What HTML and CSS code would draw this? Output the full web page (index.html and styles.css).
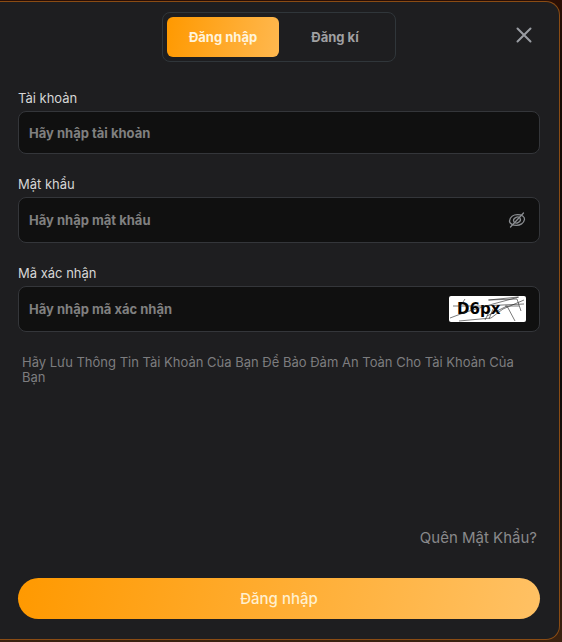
FILE: index.html
```html
<!DOCTYPE html>
<html lang="vi">
<head>
<meta charset="utf-8">
<meta name="viewport" content="width=device-width, initial-scale=1">
<title>Đăng nhập</title>
<link rel="stylesheet" href="styles.css">
</head>
<body>
<main class="modal">
  <header class="modal-head">
    <div class="tabs">
      <button class="tab tab-active" type="button">Đăng nhập</button>
      <button class="tab" type="button">Đăng kí</button>
    </div>
    <button class="icon-button close" type="button" aria-label="Đóng">
      <svg width="16" height="16" viewBox="0 0 16 16" fill="none" stroke="currentColor" stroke-width="2" stroke-linecap="round"><path d="M1.5 1.5l13 13M14.5 1.5l-13 13"/></svg>
    </button>
  </header>
  <form class="form">
    <div class="group">
      <label for="account">Tài khoản</label>
      <div class="field field-short">
        <input id="account" type="text" placeholder="Hãy nhập tài khoản">
      </div>
    </div>
    <div class="group">
      <label for="password">Mật khẩu</label>
      <div class="field">
        <input id="password" type="password" placeholder="Hãy nhập mật khẩu">
        <button class="icon-button" type="button" aria-label="Hiện mật khẩu">
          <svg width="18" height="16" viewBox="0 0 18 16" fill="none" stroke="currentColor" stroke-width="1.3" stroke-linecap="round"><path d="M1.500 9C2 5 5.500 2.600 9.500 2.600c4 0 7.500 1.900 7 4.900-.6 3.800-4.500 5.900-8 5.900S1.200 11.500 1.500 9z"/><ellipse cx="9" cy="8" rx="3.500" ry="2.800" transform="rotate(-30 9 8)"/><path d="M15.500 1L2.500 15"/></svg>
        </button>
      </div>
    </div>
    <div class="group">
      <label for="code">Mã xác nhận</label>
      <div class="field">
        <input id="code" type="text" placeholder="Hãy nhập mã xác nhận">
        <div class="captcha">
          <span>D6px</span>
          <svg class="scribble" viewBox="0 0 77 26" fill="none" stroke="#222" stroke-width=".6"><path d="M1 22L17 16L44 8L70 1M4 10L32 10L75 8M10 25L42 22L54 13L75 4M39 4L68 3L72 15M16 3L12 9M40 4L69 1M58 10L66 25M41 14L36 24M44 13L40 23M58 10L38 20M56 10H70"/></svg>
        </div>
      </div>
    </div>
    <p class="note">Hãy Lưu Thông Tin Tài Khoản Của Bạn Để Bảo Đảm An Toàn Cho Tài Khoản Của Bạn</p>
    <a class="forgot" href="#">Quên Mật Khẩu?</a>
    <button class="submit" type="submit">Đăng nhập</button>
  </form>
</main>
</body>
</html>
```
FILE: styles.css
```css
* {
  box-sizing: border-box;
}

body {
  display: flex;
  min-height: 100vh;
  margin: 0;
  padding: 1px 2px 2px 0;
  background: linear-gradient(#2b0f05, #160d05 10%, #0d0b09 60%, #3a2210);
  font-family: Inter, "Noto Sans", sans-serif;
}

button,
input {
  margin: 0;
  padding: 0;
  border: 0;
  background: none;
  font: inherit;
}

.modal {
  display: flex;
  flex: 1;
  flex-direction: column;
  padding: 10px 19px 20px 18px;
  border: 1px solid #8a4c14;
  border-left: 0;
  border-radius: 0 14px 14px 0;
  background: #1e1e20;
}

.modal-head {
  position: relative;
  display: flex;
  justify-content: center;
}

.tabs {
  display: flex;
  width: 234px;
  padding: 4px;
  border: 1px solid #30363a;
  border-radius: 8px;
}

.tab {
  flex: 1;
  height: 40px;
  border-radius: 6px;
  color: #a0a0a2;
  font-size: 13px;
  font-weight: 700;
}

.tab-active {
  background: linear-gradient(100deg, #ff9900, #ffb84f);
  color: #fff4dc;
}

.icon-button {
  display: flex;
  color: #8b8e92;
}

.close {
  position: absolute;
  top: 15px;
  right: 8px;
  color: #9a9da3;
}

.form {
  display: flex;
  flex: 1;
  flex-direction: column;
  padding-top: 26px;
}

.group {
  display: flex;
  flex-direction: column;
  gap: 3px;
  margin-bottom: 20px;
}

label {
  color: #d6d6d6;
  font-size: 13px;
  line-height: 20px;
}

.field {
  display: flex;
  align-items: center;
  gap: 10px;
  height: 46px;
  padding: 0 13px 0 10px;
  border: 1px solid #34363a;
  border-radius: 8px;
  background: #101010;
}

.field-short {
  height: 43px;
}

.field input {
  flex: 1;
  min-width: 0;
  outline: 0;
  color: #ddd;
  font-size: 13px;
  font-weight: 700;
}

.field input::placeholder {
  color: #808080;
  opacity: 1;
}

.captcha {
  position: relative;
  width: 77px;
  height: 26px;
  padding-left: 8px;
  border-radius: 2px;
  background: #fff;
  color: #000;
  font: 700 15px/26px "DejaVu Sans", sans-serif;
}

.scribble {
  position: absolute;
  inset: 0;
}

.note {
  margin: 3px 4px 0;
  color: #7d7d7f;
  font-size: 13px;
  line-height: 15px;
}

.forgot {
  align-self: flex-end;
  margin-top: auto;
  margin-right: 3px;
  margin-bottom: 30px;
  color: #89898b;
  font-size: 15px;
  line-height: 20px;
  text-decoration: none;
}

.submit {
  height: 41px;
  border-radius: 21px;
  background: linear-gradient(100deg, #ff9900, #ffc164);
  color: #fff0cf;
  font-size: 15px;
  font-weight: 500;
}
```
